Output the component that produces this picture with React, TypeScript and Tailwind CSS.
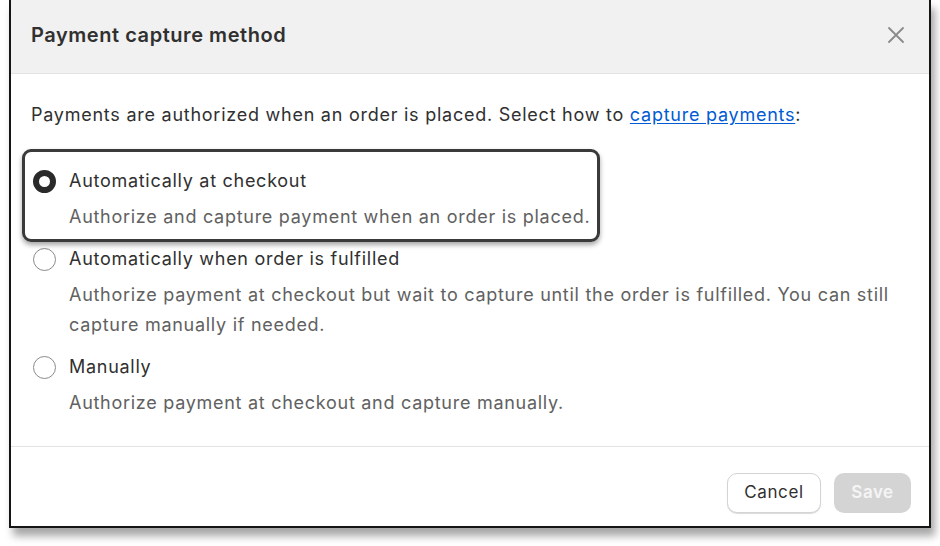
import React from "react";

function Radio({ checked }: { checked?: boolean }) {
  return checked ? (
    <span className="box-border block h-[23px] w-[23px] shrink-0 rounded-full border-[6px] border-[#2a2a2a] bg-white" />
  ) : (
    <span className="box-border block h-[23px] w-[23px] shrink-0 rounded-full border border-[#8a8a8a] bg-white" />
  );
}

function Option({
  checked,
  label,
  desc,
}: {
  checked?: boolean;
  label: string;
  desc: string;
}) {
  return (
    <div className="flex flex-col">
      <div className="flex h-[30px] items-center">
        <div className="flex w-[38px] shrink-0 pl-[2px]">
          <Radio checked={checked} />
        </div>
        <span className="text-[18px] leading-[30px] tracking-[0.72px] text-[#303030]">{label}</span>
      </div>
      <p className="mt-[6px] pl-[38px] text-[18px] leading-[30px] tracking-[0.72px] text-[#616161]">{desc}</p>
    </div>
  );
}

export default function App() {
  return (
    <div
      className="h-[546px] w-[940px] bg-white"
      style={{ fontFamily: "Inter, 'Noto Sans', sans-serif" }}
    >
      <div className="ml-[9px] flex h-[528px] w-[922px] flex-col border-x-2 border-b-2 border-[#151515] bg-white shadow-[4px_8px_8px_rgba(0,0,0,0.35)]">
        <div className="flex h-[74px] shrink-0 items-center justify-between border-b border-[#e3e3e3] bg-[#f1f1f1] pb-[4px] pl-[20px] pr-[24px]">
          <h1 className="text-[20px] font-semibold tracking-[0.55px] text-[#303030]">Payment capture method</h1>
          <svg width="18" height="18" viewBox="0 0 18 18" fill="none">
            <path d="M2 2L16 16M16 2L2 16" stroke="#8a8a8a" strokeWidth="1.8" strokeLinecap="round" />
          </svg>
        </div>
        <div className="relative flex-1 px-[20px] pt-[26px]">
          <p className="text-[18px] leading-[30px] tracking-[0.75px] text-[#303030]">
            Payments are authorized when an order is placed. Select how to{" "}
            <a className="text-[#005bd3] underline underline-offset-2">capture payments</a>:
          </p>
          <div className="relative mt-[36px] flex flex-col gap-[12px]">
            <Option
              checked
              label="Automatically at checkout"
              desc="Authorize and capture payment when an order is placed."
            />
            <Option
              label="Automatically when order is fulfilled"
              desc="Authorize payment at checkout but wait to capture until the order is fulfilled. You can still capture manually if needed."
            />
            <Option label="Manually" desc="Authorize payment at checkout and capture manually." />
            <div className="pointer-events-none absolute left-[-9px] top-[-17px] h-[93px] w-[578px] rounded-[9px] border-[3px] border-[#3a3a3a] shadow-[0_3px_5px_rgba(0,0,0,0.35)]" />
          </div>
        </div>
        <div className="flex h-[80px] shrink-0 items-start justify-end gap-[13px] border-t border-[#e3e3e3] pr-[18px] pt-[26px]">
          <button className="h-[40px] w-[94px] rounded-[10px] border border-[#d4d4d4] bg-white text-[17px] tracking-[0.6px] text-[#303030] shadow-[0_1px_1px_rgba(0,0,0,0.15)]">
            Cancel
          </button>
          <button className="h-[40px] w-[77px] rounded-[10px] bg-[#d4d4d4] text-[17px] font-semibold tracking-[0.5px] text-[#f5f5f5]">
            Save
          </button>
        </div>
      </div>
    </div>
  );
}
